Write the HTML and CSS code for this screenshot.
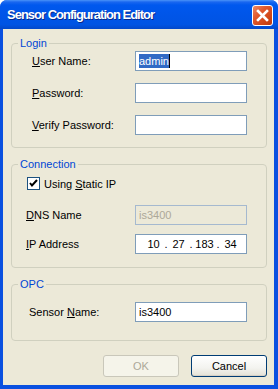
FILE: index.html
```html
<!DOCTYPE html>
<html lang="en">
<head>
    <meta charset="UTF-8">
    <title>Sensor Configuration Editor</title>
    <link rel="stylesheet" href="styles.css">
</head>
<body>
    <div class="window">
        <div class="titlebar">
            <span class="title">Sensor Configuration Editor</span>
            <button class="close-btn" title="Close">
                <svg width="13" height="13" viewBox="0 0 13 13">
                    <path d="M2 2 L11 11 M11 2 L2 11" stroke="#fff" stroke-width="2.6" stroke-linecap="square"/>
                </svg>
            </button>
        </div>

        <div class="client">
            <fieldset class="group login">
                <legend>Login</legend>
                <div class="row">
                    <label for="user"><u>U</u>ser Name:</label>
                    <div class="field" id="user"><span class="selected">admin</span><span class="caret"></span></div>
                </div>
                <div class="row">
                    <label for="pass"><u>P</u>assword:</label>
                    <div class="field" id="pass"></div>
                </div>
                <div class="row">
                    <label for="verify"><u>V</u>erify Password:</label>
                    <div class="field" id="verify"></div>
                </div>
            </fieldset>

            <fieldset class="group connection">
                <legend>Connection</legend>
                <div class="check-row">
                    <span class="checkbox">
                        <svg width="11" height="11" viewBox="0 0 11 11">
                            <path d="M2 5 L4 7.5 L9 2" fill="none" stroke="#000" stroke-width="2"/>
                        </svg>
                    </span>
                    <span>Using <u>S</u>tatic IP</span>
                </div>
                <div class="row dns">
                    <label><u>D</u>NS Name</label>
                    <div class="field disabled">is3400</div>
                </div>
                <div class="row ip">
                    <label><u>I</u>P Address</label>
                    <div class="field ip-field">
                        <span class="octet">10</span><span class="dot">.</span>
                        <span class="octet">27</span><span class="dot">.</span>
                        <span class="octet">183</span><span class="dot">.</span>
                        <span class="octet">34</span>
                    </div>
                </div>
            </fieldset>

            <fieldset class="group opc">
                <legend>OPC</legend>
                <div class="row">
                    <label>Sensor <u>N</u>ame:</label>
                    <div class="field">is3400</div>
                </div>
            </fieldset>

            <div class="buttons">
                <button class="btn" disabled>OK</button>
                <button class="btn default">Cancel</button>
            </div>
        </div>
    </div>
</body>
</html>
```

FILE: styles.css
```css
body {
    margin: 0;
    font-family: "Liberation Sans", Arial, sans-serif;
    font-size: 11px;
}
.window {
    width: 278px;
    height: 389px;
    display: flex;
    flex-direction: column;
    background: #0a50e0;
    border-radius: 7px 7px 0 0;
    overflow: hidden;
}
.titlebar {
    height: 29px;
    display: flex;
    align-items: center;
    justify-content: space-between;
    padding: 0 5px 0 7px;
    background: linear-gradient(to bottom, #4a93f8 0, #1a67f0 2px, #0058ee 5px, #0055e8 55%, #0054e3 85%, #0348c9 100%);
}
.title {
    color: #fff;
    font-weight: bold;
    font-size: 13px;
    letter-spacing: -1px;
    text-shadow: 1px 1px #0a2a8a;
}
.close-btn {
    width: 21px;
    height: 21px;
    padding: 0;
    margin-top: 1px;
    display: flex;
    align-items: center;
    justify-content: center;
    border: 1px solid #fff;
    border-radius: 3px;
    background: linear-gradient(135deg, #ee8b66 0, #e25a2f 35%, #cc4213 80%, #b83a10 100%);
}
.client {
    flex: 1;
    margin: 0 4px 4px 3px;
    background: #ece9d8;
    padding-top: 7px;
    padding-left: 8px;
    color: #000;
}
.group {
    width: 256px;
    box-sizing: border-box;
    margin: 0;
    border: 1px solid #d0d0bf;
    border-radius: 4px;
    padding: 0;
}
.group legend {
    color: #0046d5;
    line-height: 14px;
    padding: 0 2px;
    margin-left: 6px;
}
.login {
    padding-top: 1px;
    padding-bottom: 12px;
    display: flex;
    flex-direction: column;
    gap: 12px;
}
.login .row {
    padding-left: 20px;
}
.connection {
    margin-top: 9px;
    padding: 6px 0 13px 0;
}
.connection .row {
    padding-left: 14px;
}
.opc {
    margin-top: 9px;
    padding: 11px 0 18px 0;
}
.opc .row {
    padding-left: 17px;
}
.row {
    display: flex;
    align-items: center;
    justify-content: space-between;
    height: 20px;
    padding-right: 19px;
}
.field {
    width: 112px;
    height: 20px;
    box-sizing: border-box;
    border: 1px solid #7f9db9;
    background: #fff;
    padding: 0 3px;
    line-height: 18px;
    display: flex;
    align-items: center;
}
.selected {
    background: #316ac5;
    color: #fff;
    line-height: 14px;
}
.caret {
    width: 1px;
    height: 14px;
    background: #000;
}
.check-row {
    display: flex;
    align-items: center;
    gap: 4px;
    height: 13px;
    padding-left: 15px;
}
.checkbox {
    width: 13px;
    height: 13px;
    box-sizing: border-box;
    border: 1px solid #1c5180;
    background: #fff;
    display: flex;
    align-items: center;
    justify-content: center;
}
.dns {
    margin-top: 15px;
}
.ip {
    margin-top: 9px;
}
.disabled {
    background: #ece9d8;
    border-color: #a5b9cf;
    color: #aca899;
}
.ip-field {
    padding: 0 0 0 9px;
}
.octet {
    width: 17px;
    text-align: center;
}
.ip-field .octet:nth-child(5) {
    width: 19px;
}
.dot {
    width: 8px;
    text-align: center;
}
.buttons {
    display: flex;
    justify-content: flex-end;
    gap: 12px;
    margin-top: 14px;
    padding-right: 7px;
}
.btn {
    width: 76px;
    height: 22px;
    font-family: "Liberation Sans", Arial, sans-serif;
    font-size: 11px;
    border-radius: 3px;
    padding: 0;
}
.btn[disabled] {
    border: 1px solid #c9c7ba;
    background: #f5f4ea;
    color: #aca899;
}
.btn.default {
    border: 1px solid #003c74;
    background: linear-gradient(to bottom, #ffffff 0, #f3f3ef 60%, #e3e1d6 100%);
    color: #000;
    box-shadow: inset 0 -1px #d6d0c5;
}
```
